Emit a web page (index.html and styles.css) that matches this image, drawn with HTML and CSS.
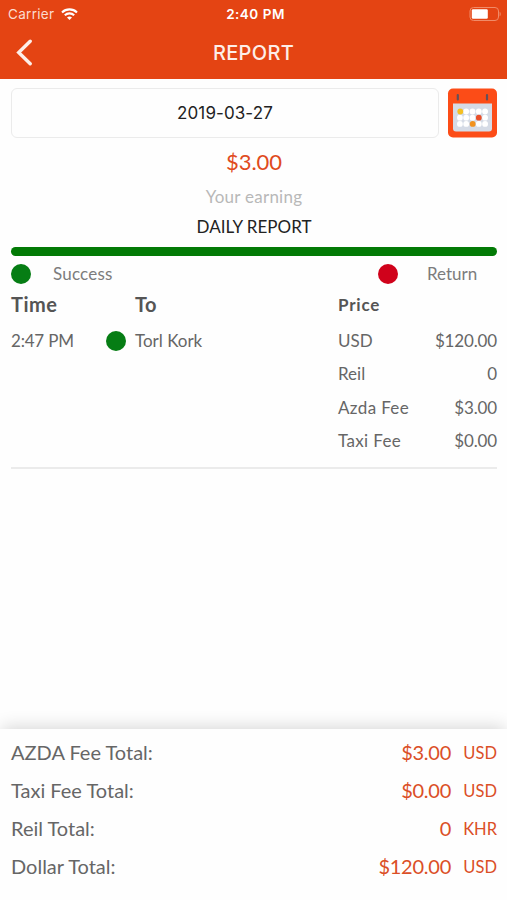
FILE: index.html
```html
<!DOCTYPE html>
<html lang="en">
<head>
  <meta charset="UTF-8">
  <meta name="viewport" content="width=device-width, initial-scale=1.0">
  <title>Report</title>
  <link rel="stylesheet" href="styles.css">
</head>
<body>
  <header>
    <div class="status-bar">
      <div class="carrier">
        <span>Carrier</span>
        <svg width="17" height="12" viewBox="0 0 17 12" fill="none" stroke="#fff" stroke-width="2.1">
          <path d="M1 4.4C5.2.4 11.8.4 16 4.4"/>
          <path d="M3.8 7.2c2.7-2.5 6.7-2.5 9.4 0"/>
          <path d="M8.5 12L6 9.5c1.4-1.3 3.6-1.3 5 0z" fill="#fff" stroke="none"/>
        </svg>
      </div>
      <div class="clock">2:40 PM</div>
      <div class="battery">
        <svg width="32" height="14" viewBox="0 0 32 14">
          <rect x="1" y=".5" width="28.5" height="13" rx="3.5" fill="none" stroke="#f08b68"/>
          <rect x="2.8" y="2.2" width="16" height="9.6" rx="1.2" fill="#fff"/>
          <path d="M30.6 4.7c1.5.6 1.5 4 0 4.6z" fill="#f08b68"/>
        </svg>
      </div>
    </div>
    <div class="nav-bar">
      <a href="#" class="back">
        <svg width="17" height="27" viewBox="0 0 17 27" fill="none" stroke="#fdeee8" stroke-width="3.4" stroke-linecap="round" stroke-linejoin="miter">
          <path d="M14.2 2.2L2.7 13.5l11.5 11.3"/>
        </svg>
      </a>
      <h1>REPORT</h1>
    </div>
  </header>

  <main>
    <div class="date-row">
      <div class="date">2019-03-27</div>
      <svg class="calendar" width="50" height="50" viewBox="0 0 50 50">
        <rect x="1" y=".5" width="49" height="49" rx="5" fill="#fc4c17"/>
        <path d="M6 15.5h39v25a3 3 0 0 1-3 3H9a3 3 0 0 1-3-3z" fill="#d5dbe6"/>
        <path d="M10.8 7v4.5M40 7v4.5" stroke="#63505a" stroke-width="2.2" stroke-linecap="round"/>
        <g fill="#fff">
          <circle cx="19.2" cy="23.5" r="2.9"/><circle cx="25.5" cy="23.5" r="2.9"/><circle cx="31.8" cy="23.5" r="2.9"/><circle cx="38.1" cy="23.5" r="2.9"/>
          <circle cx="12.9" cy="29.7" r="2.9"/><circle cx="19.2" cy="29.7" r="2.9"/><circle cx="25.5" cy="29.7" r="2.9"/><circle cx="38.1" cy="29.7" r="2.9"/>
          <circle cx="12.9" cy="35.9" r="2.9"/><circle cx="19.2" cy="35.9" r="2.9"/><circle cx="31.8" cy="35.9" r="2.9"/><circle cx="38.1" cy="35.9" r="2.9"/>
        </g>
        <circle cx="13.3" cy="23.5" r="2.9" fill="#f5c022"/>
        <circle cx="31.8" cy="29.7" r="2.9" fill="#e9502a"/>
        <circle cx="25.7" cy="35.9" r="2.9" fill="#f2921e"/>
      </svg>
    </div>

    <div class="earning">$3.00</div>
    <div class="earning-label">Your earning</div>
    <h2>DAILY REPORT</h2>
    <div class="bar"></div>

    <div class="legend">
      <span class="dot green"></span>
      <span class="success">Success</span>
      <span class="dot red"></span>
      <span class="return">Return</span>
    </div>

    <div class="grid head">
      <div class="big">Time</div>
      <div></div>
      <div class="big">To</div>
      <div>Price</div>
    </div>

    <div class="grid trip">
      <div class="time">2:47 PM</div>
      <div class="marker"><span class="dot green"></span></div>
      <div class="to">Torl Kork</div>
      <div class="prices">
        <div class="price"><span>USD</span><span class="amount">$120.00</span></div>
        <div class="price"><span>Reil</span><span class="amount">0</span></div>
        <div class="price"><span class="wide">Azda Fee</span><span class="amount">$3.00</span></div>
        <div class="price"><span class="wide">Taxi Fee</span><span class="amount">$0.00</span></div>
      </div>
    </div>
  </main>

  <footer>
    <div class="total"><span class="name">AZDA Fee Total:</span><span class="sum">$3.00</span><span class="unit">USD</span></div>
    <div class="total"><span class="name">Taxi Fee Total:</span><span class="sum">$0.00</span><span class="unit">USD</span></div>
    <div class="total"><span class="name">Reil Total:</span><span class="sum">0</span><span class="unit">KHR</span></div>
    <div class="total"><span class="name">Dollar Total:</span><span class="sum">$120.00</span><span class="unit">USD</span></div>
  </footer>
</body>
</html>
```
FILE: styles.css
```css
* {
  box-sizing: border-box;
}

body {
  margin: 0;
  height: 900px;
  display: flex;
  flex-direction: column;
  overflow: hidden;
  background-color: #fefefe;
  color: #666;
  font-family: Lato, sans-serif;
  font-size: 17px;
}

svg {
  display: block;
}

header {
  height: 79px;
  background-color: #e44413;
  color: #fff;
  font-family: Inter, sans-serif;
}

.status-bar {
  height: 27px;
  padding: 0 6px 0 8px;
  display: grid;
  grid-template-columns: 1fr auto 1fr;
  align-items: center;
}

.carrier {
  display: flex;
  align-items: center;
  gap: 7px;
  font-size: 13.5px;
  letter-spacing: 0.3px;
  color: #fbdcd0;
}

.clock {
  font-size: 13.5px;
  font-weight: 600;
  letter-spacing: 0.5px;
  padding-left: 2px;
}

.battery {
  justify-self: end;
}

.nav-bar {
  height: 51px;
  padding: 0 16px;
  display: grid;
  grid-template-columns: 1fr auto 1fr;
  align-items: center;
}

h1 {
  margin: 0;
  font-size: 20px;
  font-weight: 500;
  letter-spacing: 0.3px;
  color: #fdeee8;
}

main {
  flex: 1;
  padding: 9px 10px 0 11px;
}

.date-row {
  display: flex;
  justify-content: space-between;
}

.date {
  width: 428px;
  height: 50px;
  border: 1px solid #ebebeb;
  border-radius: 6px;
  color: #222;
  font-family: Inter, sans-serif;
  font-size: 17px;
  letter-spacing: 0.1px;
  line-height: 48px;
  text-align: center;
}

.earning {
  height: 48px;
  line-height: 47px;
  font-size: 22px;
  text-align: center;
  color: #e04a20;
}

.earning-label {
  height: 22px;
  line-height: 22px;
  letter-spacing: 0.25px;
  text-align: center;
  color: #b8b8b8;
}

h2 {
  margin: 0;
  height: 38px;
  line-height: 38px;
  font-size: 17px;
  font-weight: 400;
  text-align: center;
  color: #222;
}

.bar {
  height: 9px;
  margin-top: 1px;
  border-radius: 5px;
  background-color: #027a05;
}

.legend {
  height: 35px;
  display: flex;
  align-items: center;
  color: #7c7c7c;
}

.dot {
  flex: none;
  width: 20px;
  height: 20px;
  border-radius: 50%;
}

.green {
  background-color: #067d14;
}

.red {
  background-color: #d0021b;
}

.success {
  margin-left: 22px;
  flex: 1;
  letter-spacing: 0.2px;
}

.return {
  width: 50px;
  margin: 0 20px 0 29px;
}

.grid {
  display: grid;
  grid-template-columns: 94px 30px 203px 1fr;
}

.head {
  height: 28px;
  line-height: 28px;
  font-weight: 700;
  letter-spacing: 0.8px;
  color: #555;
}

.big {
  font-size: 20px;
  line-height: 27px;
  letter-spacing: 0.5px;
}

.trip {
  height: 150px;
  padding-top: 5px;
  border-bottom: 2px solid #ebebeb;
  line-height: 33.4px;
}

.time {
  letter-spacing: -0.2px;
}

.marker {
  height: 33px;
  padding-left: 1px;
  display: flex;
  align-items: center;
}

.price {
  display: flex;
  justify-content: space-between;
}

.wide {
  letter-spacing: 0.35px;
}

.amount {
  letter-spacing: -0.15px;
}

footer {
  height: 171px;
  padding: 5px 10px 0 11px;
  background-color: #fefefe;
  box-shadow: 0 -4px 16px -2px rgba(0, 0, 0, 0.16);
}

.total {
  height: 38px;
  line-height: 36px;
  display: flex;
  font-size: 20px;
}

.name {
  flex: 1;
}

.sum {
  color: #db4f27;
  letter-spacing: -0.25px;
}

.unit {
  width: 46px;
  line-height: 38px;
  text-align: right;
  font-size: 16.5px;
  color: #db4f27;
}
```
